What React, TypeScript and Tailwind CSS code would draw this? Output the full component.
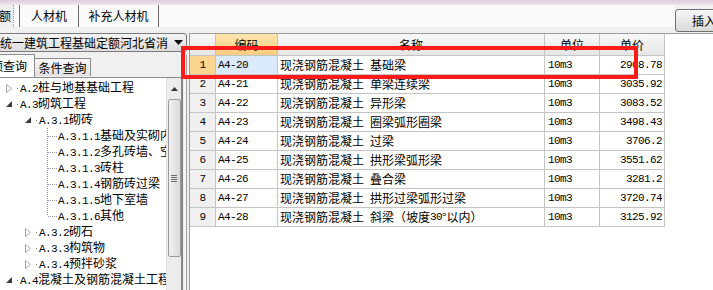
import React from "react"

type TreeNode = { lvl: number; exp?: "open" | "closed"; text: string; last?: boolean }

const tree: TreeNode[] = [
  { lvl: 0, exp: "closed", text: "A.2桩与地基基础工程" },
  { lvl: 0, exp: "open", text: "A.3砌筑工程" },
  { lvl: 1, exp: "open", text: "A.3.1砌砖" },
  { lvl: 2, text: "A.3.1.1基础及实砌内外墙" },
  { lvl: 2, text: "A.3.1.2多孔砖墙、空心砖墙" },
  { lvl: 2, text: "A.3.1.3砖柱" },
  { lvl: 2, text: "A.3.1.4钢筋砖过梁" },
  { lvl: 2, text: "A.3.1.5地下室墙" },
  { lvl: 2, text: "A.3.1.6其他", last: true },
  { lvl: 1, exp: "closed", text: "A.3.2砌石" },
  { lvl: 1, exp: "closed", text: "A.3.3构筑物" },
  { lvl: 1, exp: "closed", text: "A.3.4预拌砂浆" },
  { lvl: 0, exp: "open", text: "A.4混凝土及钢筋混凝土工程" },
]

const rows = [
  ["A4-20", "现浇钢筋混凝土 基础梁", "10m3", "2908.78"],
  ["A4-21", "现浇钢筋混凝土 单梁连续梁", "10m3", "3035.92"],
  ["A4-22", "现浇钢筋混凝土 异形梁", "10m3", "3083.52"],
  ["A4-23", "现浇钢筋混凝土 圈梁弧形圈梁", "10m3", "3498.43"],
  ["A4-24", "现浇钢筋混凝土 过梁", "10m3", "3706.2"],
  ["A4-25", "现浇钢筋混凝土 拱形梁弧形梁", "10m3", "3551.62"],
  ["A4-26", "现浇钢筋混凝土 叠合梁", "10m3", "3281.2"],
  ["A4-27", "现浇钢筋混凝土 拱形过梁弧形过梁", "10m3", "3720.74"],
  ["A4-28", "现浇钢筋混凝土 斜梁（坡度30°以内）", "10m3", "3125.92"],
]

// half-width latin runs in a mono face, like the old bitmap font
function Mx({ s }: { s: string }) {
  const parts = s.split(/([\x20-\x7e]+)/).filter(Boolean)
  return (
    <>
      {parts.map((p, i) =>
        /^[\x20-\x7e]+$/.test(p) ? (
          <span key={i} className="font-['Liberation_Mono'] text-[11px] leading-[16px] tracking-[-0.6px] whitespace-pre">
            {p}
          </span>
        ) : (
          <span key={i}>{p}</span>
        )
      )}
    </>
  )
}

function Expander({ open }: { open: boolean }) {
  return open ? (
    <svg width="6" height="6" viewBox="0 0 6 6">
      <path d="M6 0 L6 6 L0 6 Z" fill="#3a3a3a" />
    </svg>
  ) : (
    <svg width="6" height="9" viewBox="0 0 6 9">
      <path d="M0.5 0.5 L5.5 4.5 L0.5 8.5 Z" fill="#fff" stroke="#a8a8a8" />
    </svg>
  )
}

function TreeRow({ node }: { node: TreeNode }) {
  if (node.lvl === 2) {
    return (
      <div className="flex h-[16px] items-center whitespace-nowrap pl-[47px]">
        <svg width="11" height="16" viewBox="0 0 11 16" className="shrink-0">
          <line x1="0.5" y1="0" x2="0.5" y2={node.last ? 8 : 16} stroke="#9a9a9a" strokeDasharray="1 1" />
          <line x1="1" y1="8.5" x2="10" y2="8.5" stroke="#9a9a9a" strokeDasharray="1 1" />
        </svg>
        <span className="leading-[16px]">
          <Mx s={node.text} />
        </span>
      </div>
    )
  }
  return (
    <div className={`flex h-[16px] items-center whitespace-nowrap ${node.lvl === 0 ? "pl-[4px]" : "pl-[23px]"}`}>
      <div className="flex w-[10px] shrink-0 items-center justify-center">
        <Expander open={node.exp === "open"} />
      </div>
      <div className="flex w-[6px] shrink-0 items-center justify-center">
        <div className="h-[1px] w-[1px] bg-[#808080]" />
      </div>
      <span className="leading-[16px]">
        <Mx s={node.text} />
      </span>
    </div>
  )
}

const cell = "flex h-[19px] items-center border-b border-r border-[#c4c4c4] leading-[16px]"
const head = "flex h-[22px] items-center justify-center border-b border-r border-[#c4c4c4] leading-[16px]"

export default function App() {
  return (
    <div className="relative h-[290px] w-[713px] overflow-hidden bg-[#f0f0f0] font-['Noto_Sans_CJK_SC',sans-serif] text-[12px] text-black">
      {/* blurred window title strip */}
      <div className="h-[5px] bg-linear-to-b from-[#dccbdb] to-[#efe5ee]" />

      {/* tab strip + insert button */}
      <div className="flex h-[28px] items-start">
        <div className="flex h-[22px] w-[675px] shrink-0 items-stretch bg-[#fafafa]">
          <div className="flex w-[14px] items-center overflow-hidden border-r border-dotted border-[#9a9a9a] bg-[#efefef]">
            <span className="ml-[-1px] leading-[16px]">额</span>
          </div>
          <div className="w-[5px]" />
          <div className="flex w-[59px] items-center justify-center border-l border-l-[#6a6a6a] leading-[16px]">人材机</div>
          <div className="flex w-[81px] items-center justify-center border-l border-r border-[#6a6a6a] leading-[16px]">补充人材机</div>
        </div>
        <div className="mt-[4px] flex h-[23px] w-[60px] shrink-0 items-center rounded-[3px] border border-[#707070] bg-linear-to-b from-[#f6f6f6] to-[#dadada] pl-[16px] leading-[16px]">
          插入
        </div>
      </div>

      {/* main */}
      <div className="flex h-[257px]">
        {/* left panel */}
        <div className="flex w-[187px] shrink-0 flex-col">
          <div className="ml-[-4px] flex h-[19px] w-[191px] items-center justify-between rounded-[3px] border border-[#7a7a7a] bg-linear-to-b from-[#f4f4f4] to-[#dedede] pl-[3px] pr-[3px]">
            <span className="whitespace-nowrap leading-[16px]">统一建筑工程基础定额河北省消</span>
            <svg width="9" height="5" viewBox="0 0 9 5" className="shrink-0">
              <path d="M0 0 L9 0 L4.5 5 Z" fill="#111" />
            </svg>
          </div>

          <div className="flex flex-1 min-h-0">
            <div className="flex w-[182px] shrink-0 flex-col">
              {/* query tabs */}
              <div className="relative z-10 mt-[3px] flex h-[22px] items-end">
                <div className="flex h-[23px] w-[35px] items-center overflow-hidden border-r border-t border-[#8c8c8c] bg-white">
                  <span className="ml-[-9px] whitespace-nowrap leading-[16px]">额查询</span>
                </div>
                <div className="mb-[1px] flex h-[18px] w-[56px] items-center justify-center border-r border-t border-[#8c8c8c] bg-linear-to-b from-[#f7f7f7] to-[#e2e2e2] leading-[16px]">
                  条件查询
                </div>
              </div>

              {/* tree */}
              <div className="flex flex-1 min-h-0 border-r border-t border-[#8c8c8c] bg-white">
                <div className="w-[166px] overflow-hidden pt-[2px]">
                  {tree.map((n, i) => (
                    <TreeRow key={i} node={n} />
                  ))}
                </div>
                <div className="flex w-[15px] flex-col items-center border-l border-[#e2e2e2] bg-[#ececec]">
                  <div className="flex h-[21px] items-center">
                    <svg width="7" height="4" viewBox="0 0 7 4">
                      <path d="M0 4 L7 4 L3.5 0 Z" fill="#333" />
                    </svg>
                  </div>
                  <div className="flex h-[158px] w-[13px] items-center justify-center rounded-[2px] border border-[#9a9a9a] bg-linear-to-r from-[#f2f2f2] to-[#d9d9d9]">
                    <div className="flex flex-col gap-[1px]">
                      <div className="h-[1px] w-[6px] bg-[#6a6a6a]" />
                      <div className="h-[1px] w-[6px] bg-[#6a6a6a]" />
                      <div className="h-[1px] w-[6px] bg-[#6a6a6a]" />
                      <div className="h-[1px] w-[6px] bg-[#6a6a6a]" />
                    </div>
                  </div>
                </div>
              </div>
            </div>
            {/* splitter */}
            <div className="mt-[3px] flex w-[5px] shrink-0 justify-center gap-[1px]">
              <div className="w-[1px] bg-[#7c7c7c]" />
              <div className="w-[1px] bg-[#fafafa]" />
              <div className="w-[1px] bg-[#a4a4a4]" />
            </div>
          </div>
        </div>

        {/* grid */}
        <div className="ml-[2px] flex-1 border-l border-t border-[#9c9c9c] bg-white">
          <div className="grid grid-cols-[26px_62px_267px_55px_65px]">
            <div className={`${head} bg-linear-to-b from-[#f8f8f8] to-[#e6e6e6]`} />
            <div className={`${head} bg-linear-to-b from-[#fde6ae] to-[#f7cd80]`}>编码</div>
            <div className={`${head} bg-linear-to-b from-[#f8f8f8] to-[#e6e6e6]`}>名称</div>
            <div className={`${head} bg-linear-to-b from-[#f8f8f8] to-[#e6e6e6]`}>单位</div>
            <div className={`${head} bg-linear-to-b from-[#f8f8f8] to-[#e6e6e6]`}>单价</div>

            {rows.map((r, i) => (
              <React.Fragment key={i}>
                <div className={`${cell} justify-center ${i === 0 ? "bg-[#fcd590]" : "bg-[#f0f0f0]"}`}>
                  <Mx s={String(i + 1)} />
                </div>
                <div className={`${cell} pl-[2px] ${i === 0 ? "bg-[#dcebfc]" : ""}`}>
                  <Mx s={r[0]} />
                </div>
                <div className={`${cell} overflow-hidden whitespace-nowrap pl-[2px]`}>
                  <Mx s={r[1]} />
                </div>
                <div className={`${cell} pl-[3px]`}>
                  <Mx s={r[2]} />
                </div>
                <div className={`${cell} justify-end pr-[2px]`}>
                  <Mx s={r[3]} />
                </div>
              </React.Fragment>
            ))}
          </div>
        </div>
      </div>

      {/* red highlight box drawn over the first row */}
      <div className="pointer-events-none absolute left-[181px] top-[46px] h-[33px] w-[457px] border-[4px] border-[#ff1a1a]" />
    </div>
  )
}
